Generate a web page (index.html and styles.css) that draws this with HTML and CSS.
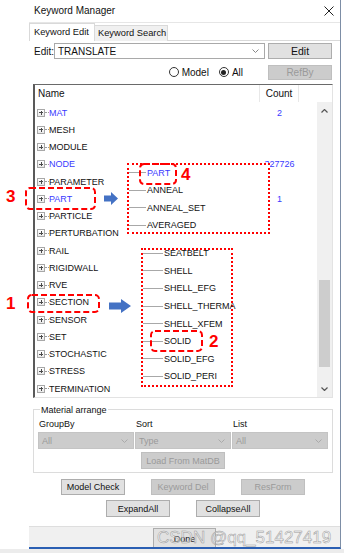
FILE: index.html
```html
<!DOCTYPE html>
<html>
<head>
<meta charset="utf-8">
<link rel="stylesheet" href="styles.css">
</head>
<body>
<div class="page">
  <div class="window">
    <div class="titlebar">
      <span class="title">Keyword Manager</span>
      <svg class="close" width="10" height="10" viewBox="0 0 10 10"><path d="M0.5 0.5 L9.5 9.5 M9.5 0.5 L0.5 9.5" stroke="#222" stroke-width="1"/></svg>
    </div>
    <div class="tabs">
      <div class="tab active">Keyword Edit</div>
      <div class="tab">Keyword Search</div>
    </div>
    <div class="panel">
      <div class="edit-row">
        <span class="edit-label">Edit:</span>
        <div class="combo"><span>TRANSLATE</span><svg width="7" height="4" viewBox="0 0 7 4"><path d="M0.5 0.5 L3.5 3.5 L6.5 0.5" fill="none" stroke="#888" stroke-width="1"/></svg></div>
        <div class="btn">Edit</div>
      </div>
      <div class="radio-row">
        <span class="radio"><i class="rb"></i>Model</span>
        <span class="radio"><i class="rb on"></i>All</span>
        <div class="btn disabled">RefBy</div>
      </div>
      <div class="tree">
        <div class="tree-head">
          <div class="col-name">Name</div>
          <div class="col-count">Count</div>
          <div class="col-rest"></div>
        </div>
        <div class="tree-body">
          <div class="rows">
            <div class="row"><div class="cell-name"><i class="pm"></i><i class="conn"></i><span class="blue">MAT</span></div><div class="cell-count">2</div></div>
            <div class="row"><div class="cell-name"><i class="pm"></i><i class="conn"></i><span>MESH</span></div><div class="cell-count"></div></div>
            <div class="row"><div class="cell-name"><i class="pm"></i><i class="conn"></i><span>MODULE</span></div><div class="cell-count"></div></div>
            <div class="row"><div class="cell-name"><i class="pm"></i><i class="conn"></i><span class="blue">NODE</span></div><div class="cell-count">327726</div></div>
            <div class="row"><div class="cell-name"><i class="pm"></i><i class="conn"></i><span>PARAMETER</span></div><div class="cell-count"></div></div>
            <div class="row"><div class="cell-name"><i class="pm"></i><i class="conn"></i><span class="blue">PART</span></div><div class="cell-count">1</div></div>
            <div class="row"><div class="cell-name"><i class="pm"></i><i class="conn"></i><span>PARTICLE</span></div><div class="cell-count"></div></div>
            <div class="row"><div class="cell-name"><i class="pm"></i><i class="conn"></i><span>PERTURBATION</span></div><div class="cell-count"></div></div>
            <div class="row"><div class="cell-name"><i class="pm"></i><i class="conn"></i><span>RAIL</span></div><div class="cell-count"></div></div>
            <div class="row"><div class="cell-name"><i class="pm"></i><i class="conn"></i><span>RIGIDWALL</span></div><div class="cell-count"></div></div>
            <div class="row"><div class="cell-name"><i class="pm"></i><i class="conn"></i><span>RVE</span></div><div class="cell-count"></div></div>
            <div class="row"><div class="cell-name"><i class="pm"></i><i class="conn"></i><span>SECTION</span></div><div class="cell-count"></div></div>
            <div class="row"><div class="cell-name"><i class="pm"></i><i class="conn"></i><span>SENSOR</span></div><div class="cell-count"></div></div>
            <div class="row"><div class="cell-name"><i class="pm"></i><i class="conn"></i><span>SET</span></div><div class="cell-count"></div></div>
            <div class="row"><div class="cell-name"><i class="pm"></i><i class="conn"></i><span>STOCHASTIC</span></div><div class="cell-count"></div></div>
            <div class="row"><div class="cell-name"><i class="pm"></i><i class="conn"></i><span>STRESS</span></div><div class="cell-count"></div></div>
            <div class="row"><div class="cell-name"><i class="pm"></i><i class="conn"></i><span>TERMINATION</span></div><div class="cell-count"></div></div>
          </div>
          <div class="scrollbar">
            <div class="sb-btn"><svg width="7" height="4" viewBox="0 0 7 4"><path d="M0.5 3.5 L3.5 0.5 L6.5 3.5" fill="none" stroke="#555" stroke-width="1.2"/></svg></div>
            <div class="sb-track"><div class="sb-thumb"></div></div>
            <div class="sb-btn"><svg width="7" height="4" viewBox="0 0 7 4"><path d="M0.5 0.5 L3.5 3.5 L6.5 0.5" fill="none" stroke="#555" stroke-width="1.2"/></svg></div>
          </div>
        </div>
      </div>
      <div class="group">
        <div class="group-title">Material arrange</div>
        <div class="group-grid">
          <div class="glabel">GroupBy</div>
          <div class="glabel">Sort</div>
          <div class="glabel">List</div>
          <div class="gselect"><span>All</span><svg width="7" height="4" viewBox="0 0 7 4"><path d="M0.5 0.5 L3.5 3.5 L6.5 0.5" fill="none" stroke="#aaa" stroke-width="1"/></svg></div>
          <div class="gselect"><span>Type</span><svg width="7" height="4" viewBox="0 0 7 4"><path d="M0.5 0.5 L3.5 3.5 L6.5 0.5" fill="none" stroke="#aaa" stroke-width="1"/></svg></div>
          <div class="gselect"><span>All</span><svg width="7" height="4" viewBox="0 0 7 4"><path d="M0.5 0.5 L3.5 3.5 L6.5 0.5" fill="none" stroke="#aaa" stroke-width="1"/></svg></div>
        </div>
        <div class="btn disabled load">Load From MatDB</div>
      </div>
      <div class="btn-row first">
        <div class="btn">Model Check</div>
        <div class="btn disabled">Keyword Del</div>
        <div class="btn disabled">ResForm</div>
      </div>
      <div class="btn-row second">
        <div class="btn">ExpandAll</div>
        <div class="btn">CollapseAll</div>
      </div>
    </div>
    <div class="status">
      <div class="btn done">Done</div>
    </div>
  </div>
  <div class="strip"></div>

  <!-- annotations -->
  <div class="dot-box box-a">
    <div class="sub-list">
      <div class="sub-item"><i class="hl"></i><span class="blue">PART</span></div>
      <div class="sub-item"><i class="hl"></i><span>ANNEAL</span></div>
      <div class="sub-item"><i class="hl"></i><span>ANNEAL_SET</span></div>
      <div class="sub-item"><i class="hl"></i><span>AVERAGED</span></div>
    </div>
  </div>
  <div class="dot-box box-b">
    <div class="sub-list">
      <div class="sub-item"><i class="hl"></i><span>SEATBELT</span></div>
      <div class="sub-item"><i class="hl"></i><span>SHELL</span></div>
      <div class="sub-item"><i class="hl"></i><span>SHELL_EFG</span></div>
      <div class="sub-item"><i class="hl"></i><span>SHELL_THERMA</span></div>
      <div class="sub-item"><i class="hl"></i><span>SHELL_XFEM</span></div>
      <div class="sub-item"><i class="hl"></i><span>SOLID</span></div>
      <div class="sub-item"><i class="hl"></i><span>SOLID_EFG</span></div>
      <div class="sub-item"><i class="hl"></i><span>SOLID_PERI</span></div>
    </div>
  </div>

  <svg class="dash d3" width="71" height="23"><rect x="1" y="1" width="69" height="21" rx="4"/></svg>
  <svg class="dash d1" width="73" height="19"><rect x="1" y="1" width="71" height="17" rx="4"/></svg>
  <svg class="dash d4" width="38" height="22"><rect x="1" y="1" width="36" height="20" rx="4"/></svg>
  <svg class="dash d2" width="53" height="22"><rect x="1" y="1" width="51" height="20" rx="4"/></svg>

  <span class="num n3">3</span>
  <span class="num n1">1</span>
  <span class="num n4">4</span>
  <span class="num n2">2</span>

  <svg class="arrow a1" width="14" height="13" viewBox="0 0 14 13"><path d="M0 3.5 H7 V0 L14 6.5 L7 13 V9.5 H0 Z" fill="#4472c4"/></svg>
  <svg class="arrow a2" width="22" height="14" viewBox="0 0 22 14"><path d="M0 3.5 H12 V0 L22 7 L12 14 V10.5 H0 Z" fill="#4472c4"/></svg>

  <span class="watermark">CSDN @qq_51427419</span>
</div>
</body>
</html>
```

FILE: styles.css
```css
* { box-sizing: border-box; }
body {
  margin: 0;
  background: #fff;
  font-family: "Liberation Sans", Arial, sans-serif;
  font-size: 9px;
  color: #111;
}
.page {
  position: relative;
  width: 344px;
  height: 553px;
  overflow: hidden;
  display: flex;
  flex-direction: column;
}
.window {
  margin-left: 29px;
  width: 312px;
  height: 549px;
  border-right: 1px solid #7d8ea6;
  border-bottom: 2px solid #2b5fb3;
  display: flex;
  flex-direction: column;
  background: #fff;
}
.strip { flex: 1; background: #ececec; }

.titlebar {
  height: 23px;
  flex: none;
  display: flex;
  align-items: center;
  justify-content: space-between;
  padding: 0 6px 1px 5px;
  border-bottom: 1px solid #e6e6e6;
  font-size: 10px;
  color: #111;
}
.close { display: block; }

.tabs {
  height: 18px;
  flex: none;
  display: flex;
  align-items: flex-end;
  position: relative;
  z-index: 1;
  margin-bottom: -1px;
}
.tab {
  height: 16px;
  line-height: 15px;
  font-size: 9.3px;
  border: 1px solid #d9d9d9;
  border-bottom: none;
  background: #f0f0f0;
  padding-left: 3px;
  width: 73px;
  border-left: none;
}
.tab.active {
  height: 18px;
  line-height: 16px;
  width: 66px;
  padding-left: 4px;
  background: #fff;
  border-left: 1px solid #d9d9d9;
}

.panel {
  flex: 1;
  border-top: 1px solid #d9d9d9;
  padding: 2px 7px 0 4px;
  display: flex;
  flex-direction: column;
}

.btn {
  height: 16px;
  width: 64px;
  background: #e1e1e1;
  border: 1px solid #adadad;
  font-size: 9px;
  display: flex;
  align-items: center;
  justify-content: center;
  color: #111;
  flex: none;
}
.btn.disabled {
  background: #cccccc;
  border-color: #bfbfbf;
  color: #9a9a9a;
}

.edit-row {
  height: 16px;
  display: flex;
  align-items: center;
}
.edit-label { width: 21px; padding-left: 1px; font-size: 10px; }
.combo {
  width: 211px;
  height: 16px;
  border: 1px solid #a9a9a9;
  display: flex;
  align-items: center;
  justify-content: space-between;
  padding: 0 5px 0 3px;
  font-size: 10px;
}
.combo svg { display: block; }
.edit-row .btn { margin-left: 3px; font-size: 10.5px; }

.radio-row {
  height: 16px;
  margin-top: 5px;
  display: flex;
  align-items: center;
  justify-content: flex-end;
  padding-right: 1px;
  font-size: 10px;
}
.radio { display: flex; align-items: center; margin-right: 10px; }
.radio + .radio { margin-right: 25px; }
.rb {
  width: 10px;
  height: 10px;
  border: 1px solid #333;
  border-radius: 50%;
  margin-right: 3px;
  display: flex;
  align-items: center;
  justify-content: center;
}
.rb.on::after {
  content: "";
  width: 5px;
  height: 5px;
  border-radius: 50%;
  background: #222;
}
.radio-row .btn { font-size: 10px; height: 15px; }

.tree {
  margin-top: 4px;
  height: 314px;
  width: 300px;
  border-top: 1px solid #6a6a6a;
  border-left: 2px solid #5a5a5a;
  border-right: 1px solid #e3e3e3;
  border-bottom: 1px solid #e3e3e3;
  display: flex;
  flex-direction: column;
}
.tree-head {
  height: 17px;
  display: flex;
  font-size: 10px;
  flex: none;
}
.col-name { width: 225px; padding-left: 3px; line-height: 17px; border-right: 1px solid #e8e8e8; }
.col-count { width: 39px; text-align: center; line-height: 17px; border-right: 1px solid #e8e8e8; }
.col-rest { flex: 1; }

.tree-body { flex: 1; display: flex; min-height: 0; }
.rows { flex: 1; padding-top: 2px; overflow: hidden; }
.row { height: 17.25px; display: flex; align-items: center; }
.cell-name { width: 225px; display: flex; align-items: center; padding-left: 2px; }
.cell-count { width: 39px; text-align: center; color: #3a3aff; }
.pm {
  width: 8px;
  height: 8px;
  border: 1px solid #a8a8a8;
  background: linear-gradient(#fff, #e9e9e9);
  position: relative;
  flex: none;
}
.pm::before, .pm::after {
  content: "";
  position: absolute;
  background: #4a4a4a;
}
.pm::before { left: 1px; right: 1px; top: 2.5px; height: 1px; }
.pm::after { top: 1px; bottom: 1px; left: 2.5px; width: 1px; }
.conn { width: 4px; flex: none; border-top: 1px dotted #9a9a9a; }
.blue { color: #3a3aff; }

.scrollbar {
  width: 15px;
  background: #f0f0f0;
  display: flex;
  flex-direction: column;
}
.sb-btn { height: 17px; display: flex; align-items: center; justify-content: center; }
.sb-btn svg { display: block; }
.sb-track { flex: 1; padding: 0 2px; }
.sb-thumb { margin-top: 161px; height: 87px; background: #cdcdcd; }

.group {
  margin-top: 11px;
  height: 64px;
  border: 1px solid #dcdcdc;
  padding: 0 4px 2px 4px;
  display: flex;
  flex-direction: column;
}
.group-title {
  margin-top: -6px;
  margin-left: 2px;
  align-self: flex-start;
  background: #fff;
  padding: 0 1px;
  line-height: 12px;
}
.group-grid {
  margin-top: 2px;
  display: grid;
  grid-template-columns: 96px 96px 96px;
  column-gap: 1px;
  row-gap: 1px;
}
.glabel { padding-left: 1px; line-height: 13px; }
.gselect {
  height: 17px;
  background: #cccccc;
  border: 1px solid #c4c4c4;
  color: #9a9a9a;
  display: flex;
  align-items: center;
  justify-content: space-between;
  padding: 0 5px 0 3px;
}
.gselect svg { display: block; }
.load { width: 84px; height: 17px; margin-top: 3px; align-self: center; }

.btn-row { display: flex; justify-content: center; gap: 26px; }
.btn-row.first { margin-top: 6px; }
.btn-row.second { margin-top: 5px; }
.btn-row.second .btn { height: 17px; }

.status {
  height: 21px;
  flex: none;
  background: #f0f0f0;
  border-top: 1px solid #dedede;
  display: flex;
  justify-content: center;
  padding-top: 1px;
  overflow: hidden;
}
.done { height: 21px; width: 63px; }

/* annotations */
.dot-box {
  position: absolute;
  border: 2px dotted #ff0000;
  background: #fff;
}
.box-a { left: 127px; top: 163px; width: 143px; height: 71px; }
.box-b { left: 141px; top: 248px; width: 92px; height: 139px; }
.sub-list { display: flex; flex-direction: column; }
.box-a .sub-list { margin-top: -1px; }
.box-b .sub-list { margin-top: -5.5px; }
.sub-item { display: flex; align-items: center; white-space: nowrap; }
.box-a .sub-item { height: 17.5px; }
.box-b .sub-item { height: 17.6px; }
.hl { flex: none; border-top: 1px solid #a8a8a8; margin-right: 1px; }
.box-a .hl { width: 17px; }
.box-b .hl { width: 20px; }

.dash { position: absolute; display: block; }
.dash rect { fill: none; stroke: #ff0000; stroke-width: 2; stroke-dasharray: 6 3; }
.d3 { left: 25px; top: 187px; }
.d1 { left: 27px; top: 294px; }
.d4 { left: 139px; top: 163px; }
.d2 { left: 150px; top: 330px; }

.num {
  position: absolute;
  font-size: 17px;
  line-height: 17px;
  font-weight: bold;
  color: #ff0000;
}
.n3 { left: 6px; top: 188px; }
.n1 { left: 6px; top: 295px; }
.n4 { left: 181px; top: 166px; }
.n2 { left: 209px; top: 333px; }

.arrow { position: absolute; display: block; }
.a1 { left: 104px; top: 192px; }
.a2 { left: 109px; top: 299px; }

.watermark {
  position: absolute;
  left: 157px;
  top: 528px;
  font-size: 17px;
  line-height: 19px;
  color: rgba(255, 255, 255, 0.5);
  -webkit-text-stroke: 0.5px #9a9a9a;
  white-space: nowrap;
}
```
